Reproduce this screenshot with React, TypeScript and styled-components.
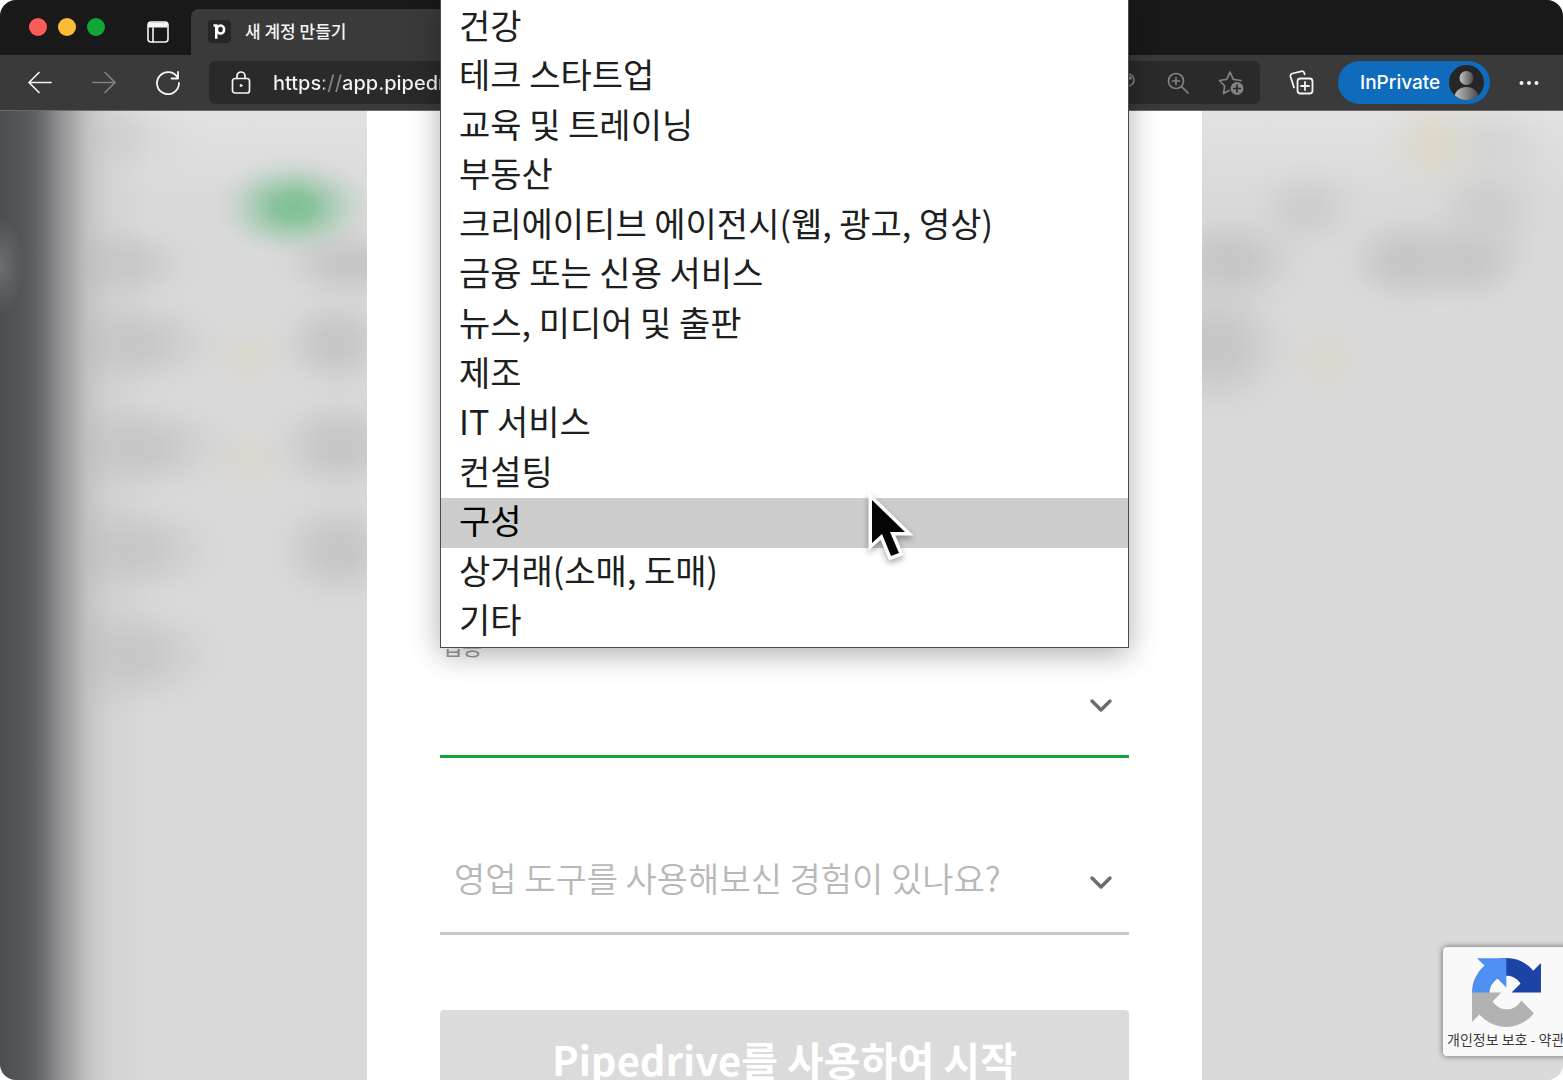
import React from "react";
import styled, { createGlobalStyle } from "styled-components";

const korean = '"Noto Sans CJK KR", "Noto Sans", sans-serif';
const chrome = 'Inter, "Noto Sans CJK KR", sans-serif';

const GlobalStyle = createGlobalStyle`
  *, *::before, *::after { box-sizing: border-box; }
  body { margin: 0; background: #ffffff; font-family: ${korean}; }
  button, input, select { font: inherit; border: 0; padding: 0; margin: 0; background: none; color: inherit; }
`;

const BrowserWindow = styled.div`
  display: flex;
  flex-direction: column;
  height: 100vh;
  position: relative;
  overflow: hidden;
  border-radius: 16px;
  background: #dadada;
`;

const TitleBar = styled.header`
  display: flex;
  align-items: center;
  height: 55px;
  padding-left: 29px;
  background: #191919;
`;

const Lights = styled.div`
  display: flex;
  gap: 11px;
  padding-bottom: 2px;
`;

const Light = styled.button<{ $color: string }>`
  width: 18px;
  height: 18px;
  border-radius: 50%;
  background: ${(p) => p.$color};
`;

const IconButton = styled.button<{ $width?: number; $dim?: boolean }>`
  display: flex;
  align-items: center;
  justify-content: center;
  flex: none;
  width: ${(p) => p.$width ?? 64}px;
  height: 46px;
  color: ${(p) => (p.$dim ? "#828282" : "#f4f4f4")};
`;

const TabActions = styled.div`
  align-self: flex-end;
  padding: 0 11px 0 31px;
`;

const Tab = styled.div`
  align-self: flex-end;
  display: flex;
  align-items: center;
  gap: 14px;
  width: 500px;
  height: 46px;
  padding: 0 17px 2px;
  border-radius: 8px 8px 0 0;
  background: #3a3a3a;
  color: #f4f4f4;
  font-size: 17px;
  font-weight: 500;
  line-height: 24px;
`;

const Toolbar = styled.nav`
  display: flex;
  align-items: center;
  height: 56px;
  padding-left: 8px;
  background: #3a3a3a;
  border-bottom: 1px solid #6a6a6a;
  font-family: ${chrome};
`;

const AddressBar = styled.form`
  flex: 1;
  display: flex;
  align-items: center;
  min-width: 0;
  height: 43px;
  margin: 0 9px;
  padding-right: 3px;
  border-radius: 6px;
  background: #2a2a2a;
`;

const Address = styled.input`
  flex: 1;
  min-width: 0;
  height: 43px;
  font-size: 20px;
  font-weight: 500;
  outline: none;
  background: linear-gradient(90deg, #f4f4f4 51px, #828282 51px, #828282 69px, #f4f4f4 69px);
  background-clip: text;
  -webkit-background-clip: text;
  color: transparent;
`;

const ProfileButton = styled.button`
  display: flex;
  align-items: center;
  justify-content: space-between;
  flex: none;
  width: 152px;
  height: 43px;
  margin: 0 5px;
  padding: 0 6px 0 22px;
  border-radius: 22px;
  background: #0f6cbd;
  color: #ffffff;
  font-size: 19px;
  font-weight: 500;
  line-height: 24px;
`;

const Page = styled.main`
  flex: 1;
  display: grid;
  grid-template-columns: 367fr 835fr 361fr;
  min-height: 0;
`;

type Spot = [x: number, y: number, rx: number, ry: number, color: string];

const paint = (spots: Spot[]) =>
  spots
    .map(
      ([x, y, rx, ry, c]) =>
        `radial-gradient(${rx}px ${ry}px at ${x}px ${y}px, rgba(${c}, 1) 0%, rgba(${c}, 0.88) 25%, rgba(${c}, 0.5) 50%, rgba(${c}, 0.16) 75%, rgba(${c}, 0) 100%)`
    )
    .join(", ");

const grey = "197, 197, 197";
const softGrey = "205, 205, 205";
const yellow = "220, 216, 202";
const paleYellow = "218, 215, 206";

const leftSpots: Spot[] = [
  [293, 96, 80, 52, "128, 192, 149"],
  [115, 26, 90, 50, "211, 212, 212"],
  [110, 153, 100, 50, grey],
  [350, 153, 84, 46, grey],
  [125, 232, 112, 58, grey],
  [337, 232, 70, 58, grey],
  [130, 336, 118, 60, grey],
  [340, 335, 82, 60, grey],
  [120, 439, 118, 62, grey],
  [338, 439, 76, 64, grey],
  [120, 544, 118, 66, grey],
  [248, 246, 46, 40, paleYellow],
  [250, 349, 46, 42, paleYellow],
];

const rightSpots: Spot[] = [
  [233, 34, 60, 56, yellow],
  [105, 98, 64, 50, softGrey],
  [290, 36, 76, 54, "212, 213, 212"],
  [286, 98, 70, 68, softGrey],
  [28, 150, 88, 58, grey],
  [204, 150, 74, 56, grey],
  [268, 147, 70, 56, grey],
  [14, 235, 88, 80, grey],
  [123, 248, 50, 46, paleYellow],
];

const PageSide = styled.div<{ $sidebar?: boolean; $spots: Spot[] }>`
  background:
    ${(p) =>
      p.$sidebar
        ? `radial-gradient(24px 50px at 0px 155px, rgba(112, 114, 116, 0.9), rgba(112, 114, 116, 0)),
           linear-gradient(90deg, #4b4d51 0px, #54565a 22px, #606266 36px, #717376 46px, #858688 54px, #979798 63px, #a6a6a6 72px, rgba(180, 180, 180, 0.95) 80px, rgba(190, 190, 190, 0.75) 90px, rgba(200, 200, 200, 0.4) 110px, rgba(212, 212, 212, 0) 150px),`
        : ""}
    ${(p) => paint(p.$spots)},
    linear-gradient(180deg, #e2e2e2 0px, #dadada 80px);
`;

const Dialog = styled.section`
  padding: 525px 73px 0;
  background: #ffffff;
`;

const Form = styled.form`
  display: flex;
  flex-direction: column;
  color: #26292c;
`;

const Field = styled.div`
  position: relative;
  display: flex;
  flex-direction: column;
  margin-bottom: 55px;
`;

const Label = styled.label`
  height: 24px;
  padding-left: 2px;
  color: #9a9a9a;
  font-size: 22px;
  line-height: 18px;
`;

const SelectBox = styled.div<{ $active?: boolean }>`
  display: flex;
  align-items: center;
  height: 98px;
  padding-right: 16px;
  border-bottom: 3px solid ${(p) => (p.$active ? "#17a23c" : "#c8c8c8")};
  color: #6c6c6c;
`;

const Select = styled.select`
  appearance: none;
  flex: 1;
  min-width: 0;
  height: 95px;
  padding: 0 56px 14px 14px;
  margin-right: -40px;
  color: #b8b8b8;
  font-size: 34px;
  font-weight: 350;
  line-height: 50px;
  outline: none;
`;

const Chevron = styled.svg`
  flex: none;
  margin-bottom: 4px;
  pointer-events: none;
`;

const Menu = styled.ul`
  position: absolute;
  z-index: 5;
  left: 0;
  right: 0;
  bottom: calc(100% - 12px);
  display: grid;
  grid-auto-rows: 1fr;
  height: 649px;
  margin: 0;
  padding: 4px 0 0;
  list-style: none;
  border: 1px solid #4c4c4c;
  border-top: 0;
  background: #ffffff;
  box-shadow: 0 6px 28px rgba(0, 0, 0, 0.32);
`;

const Option = styled.li<{ $active?: boolean }>`
  display: flex;
  align-items: center;
  padding: 0 18px 6px;
  background: ${(p) => (p.$active ? "#cdcdcd" : "transparent")};
  color: ${(p) => (p.$active ? "#000000" : "#1c1e20")};
  font-size: 34px;
  line-height: 42px;
  white-space: nowrap;
`;

const Pointer = styled.svg`
  position: absolute;
  left: 421px;
  top: 489px;
  filter: drop-shadow(0 3px 3px rgba(0, 0, 0, 0.35));
`;

const Submit = styled.button`
  height: 110px;
  margin-top: 20px;
  padding-bottom: 12px;
  border-radius: 4px;
  background: #dbdbdb;
  color: #ffffff;
  font-size: 40px;
  font-weight: 700;
  line-height: 60px;
  white-space: nowrap;
`;

const Captcha = styled.aside`
  position: absolute;
  right: -16px;
  bottom: 24px;
  display: flex;
  flex-direction: column;
  align-items: flex-start;
  gap: 2px;
  width: 136px;
  height: 109px;
  padding: 11px 0 0 4px;
  border-radius: 4px;
  background: #f9f9f9;
  box-shadow: 0 0 6px rgba(0, 0, 0, 0.55);
  color: #3c3c3c;
  font-size: 14px;
  line-height: 20px;
  white-space: nowrap;
  svg { margin-left: 25px; }
  a { color: inherit; text-decoration: none; }
`;

const industries = [
  "건강",
  "테크 스타트업",
  "교육 및 트레이닝",
  "부동산",
  "크리에이티브 에이전시(웹, 광고, 영상)",
  "금융 또는 신용 서비스",
  "뉴스, 미디어 및 출판",
  "제조",
  "IT 서비스",
  "컨설팅",
  "구성",
  "상거래(소매, 도매)",
  "기타",
];

const line = {
  fill: "none",
  stroke: "currentColor",
  strokeWidth: 2,
  strokeLinecap: "round" as const,
  strokeLinejoin: "round" as const,
};

const SidebarIcon = () => (
  <svg width="22" height="22" viewBox="0 0 22 22" {...line} strokeWidth={1.6}>
    <rect x="1" y="1" width="20" height="20" rx="3" />
    <path d="M2 2h18v4H2z" fill="currentColor" strokeWidth="1" />
    <path d="M6 7v14" />
  </svg>
);

const Favicon = () => (
  <svg width="23" height="23" viewBox="0 0 23 23">
    <rect width="23" height="23" rx="4" fill="#262626" />
    <ellipse cx="12.500" cy="9.500" rx="3.600" ry="4" fill="none" stroke="#fff" strokeWidth="2.600" />
    <path d="M5.500 4.300h4v14.500H7V6.800H5.500z" fill="#fff" />
  </svg>
);

const BackIcon = () => (
  <svg width="24" height="24" viewBox="0 0 24 24" {...line} strokeWidth={1.7}>
    <path d="M23 11.500H1M11 1.500l-10 10 10 10" />
  </svg>
);

const ForwardIcon = () => (
  <svg width="24" height="24" viewBox="0 0 24 24" {...line} strokeWidth={1.7}>
    <path d="M1 11.500h22M13 1.500l10 10-10 10" />
  </svg>
);

const ReloadIcon = () => (
  <svg width="26" height="26" viewBox="0 0 26 26" {...line} strokeWidth={1.800}>
    <path d="M23 8.500A11 11 0 1 0 24 13M23 2v6.500h-6.500" />
  </svg>
);

const LockIcon = () => (
  <svg width="20" height="24" viewBox="0 0 20 24" {...line} strokeWidth={1.700}>
    <rect x="1.500" y="7.500" width="17" height="14.500" rx="2.500" />
    <path d="M6 7.500V5a4 4 0 0 1 8 0v2.500" />
    <circle cx="10" cy="14.500" r="1" fill="currentColor" strokeWidth="1" />
  </svg>
);

const KeyIcon = () => (
  <svg width="24" height="24" viewBox="0 0 24 24" {...line} strokeWidth={1.700}>
    <circle cx="15" cy="9" r="6" />
    <circle cx="17" cy="7" r="1" />
    <path d="M11 13l-8 8" />
  </svg>
);

const ZoomIcon = () => (
  <svg width="22" height="22" viewBox="0 0 22 22" {...line} strokeWidth={1.700}>
    <circle cx="9" cy="9" r="7.500" />
    <path d="M14.500 14.500L21 21M9 5.500v7M5.500 9h7" />
  </svg>
);

const StarIcon = () => (
  <svg width="26" height="26" viewBox="0 0 26 26" {...line} strokeWidth={1.700}>
    <path d="M11 20.500L5.500 23.500l1.200-7.500L1.500 10.500l7.200-1.200L12 2l3.300 7.300 7.700 1.200" />
    <circle cx="19" cy="18.500" r="6.500" fill="currentColor" stroke="none" />
    <path d="M19 15.200v6.600M15.700 18.500h6.600" stroke="#2a2a2a" />
  </svg>
);

const CollectionsIcon = () => (
  <svg width="25" height="25" viewBox="0 0 25 25" {...line} strokeWidth={1.800}>
    <rect x="8.500" y="8.500" width="15" height="15" rx="3" />
    <path d="M16 12v8M12 16h8M5 17.500L1.500 6.500a2.500 2.500 0 0 1 1.800-3l9-2.200a2.500 2.500 0 0 1 3 1.800l.3 1.200" />
  </svg>
);

const Avatar = () => (
  <svg width="35" height="35" viewBox="0 0 35 35">
    <defs>
      <linearGradient id="avatarShade">
        <stop offset="0" stopColor="#c4c4c4" />
        <stop offset="1" stopColor="#484848" />
      </linearGradient>
      <clipPath id="avatarClip">
        <circle cx="17.500" cy="17.500" r="17.500" />
      </clipPath>
    </defs>
    <circle cx="17.500" cy="17.500" r="17.500" fill="#262626" />
    <g clipPath="url(#avatarClip)" fill="url(#avatarShade)">
      <circle cx="17.500" cy="13" r="7" />
      <path d="M5 35c0-8 5-13 12.500-13S30 27 30 35z" />
    </g>
  </svg>
);

const DotsIcon = () => (
  <svg width="20" height="6" viewBox="0 0 20 6" fill="currentColor">
    <circle cx="2.500" cy="3" r="2" />
    <circle cx="10" cy="3" r="2" />
    <circle cx="17.500" cy="3" r="2" />
  </svg>
);

const ChevronIcon = () => (
  <Chevron width="24" height="16" viewBox="0 0 24 16" {...line} strokeWidth={3.500}>
    <path d="M3 3l9 9 9-9" />
  </Chevron>
);

const CaptchaLogo = () => (
  <svg width="69" height="69" viewBox="0 0 64 64">
    <path
      fill="#1c43a6"
      d="M64 31.955l-.033-1.370V4.687l-7.160 7.160C50.948 4.674 42.033.093 32.050.093c-10.400 0-19.622 4.960-25.458 12.640l11.736 11.860a15.550 15.550 0 0 1 4.754-5.334c2.050-1.600 4.952-2.906 8.968-2.906.485 0 .860.057 1.135.163 4.976.393 9.288 3.140 11.828 7.124l-8.307 8.307L64 31.953"
    />
    <path
      fill="#5090f2"
      d="M31.862.094l-1.370.033H4.594l7.160 7.160C4.580 13.147 0 22.060 0 32.046c0 10.400 4.960 19.622 12.640 25.458L24.500 45.768a15.550 15.550 0 0 1-5.334-4.754c-1.600-2.050-2.906-4.952-2.906-8.968 0-.485.057-.860.163-1.135.393-4.976 3.140-9.288 7.124-11.828l8.307 8.307L31.860.095"
    />
    <path
      fill="#b2b2b2"
      d="M.001 32.045l.033 1.370v25.898l7.160-7.160c5.860 7.173 14.774 11.754 24.760 11.754 10.400 0 19.622-4.960 25.458-12.640l-11.736-11.860a15.550 15.550 0 0 1-4.754 5.334c-2.050 1.600-4.952 2.906-8.968 2.906-.485 0-.860-.057-1.135-.163-4.976-.393-9.288-3.140-11.828-7.124l8.307-8.307c-10.522.040-22.400.066-27.295-.005"
    />
  </svg>
);

export default function App() {
  return (
    <BrowserWindow>
      <GlobalStyle />
      <TitleBar>
        <Lights>
          <Light $color="#fc5b57" aria-label="닫기" />
          <Light $color="#fdbc36" aria-label="최소화" />
          <Light $color="#12a637" aria-label="확대" />
        </Lights>
        <TabActions>
          <IconButton $width={44} aria-label="탭 작업">
            <SidebarIcon />
          </IconButton>
        </TabActions>
        <Tab>
          <Favicon />
          새 계정 만들기
        </Tab>
      </TitleBar>
      <Toolbar>
        <IconButton aria-label="뒤로">
          <BackIcon />
        </IconButton>
        <IconButton $dim aria-label="앞으로">
          <ForwardIcon />
        </IconButton>
        <IconButton aria-label="새로 고침">
          <ReloadIcon />
        </IconButton>
        <AddressBar>
          <IconButton type="button" aria-label="사이트 정보">
            <LockIcon />
          </IconButton>
          <Address aria-label="주소" defaultValue="https://app.pipedrive.com" />
          <IconButton type="button" $width={53} $dim aria-label="암호">
            <KeyIcon />
          </IconButton>
          <IconButton type="button" $width={53} $dim aria-label="확대/축소">
            <ZoomIcon />
          </IconButton>
          <IconButton type="button" $width={53} $dim aria-label="즐겨찾기">
            <StarIcon />
          </IconButton>
        </AddressBar>
        <IconButton aria-label="컬렉션">
          <CollectionsIcon />
        </IconButton>
        <ProfileButton>
          InPrivate
          <Avatar />
        </ProfileButton>
        <IconButton $width={68} aria-label="설정 및 기타">
          <DotsIcon />
        </IconButton>
      </Toolbar>
      <Page>
        <PageSide $sidebar $spots={leftSpots} />
        <Dialog>
          <Form>
            <Field>
              <Label htmlFor="industry">업종</Label>
              <SelectBox $active>
                <Select id="industry" defaultValue="">
                  <option value="" />
                  {industries.map((name) => (
                    <option key={name}>{name}</option>
                  ))}
                </Select>
                <ChevronIcon />
              </SelectBox>
              <Menu role="listbox" aria-label="업종">
                {industries.map((name) => (
                  <Option
                    key={name}
                    role="option"
                    aria-selected={name === "구성"}
                    $active={name === "구성"}
                  >
                    {name}
                  </Option>
                ))}
                <Pointer width="60" height="84" viewBox="0 0 60 84" aria-hidden="true">
                  <path
                    d="M10 12v43l10-9 9 22 8-3-9-21h15z"
                    fill="#050505"
                    stroke="#ffffff"
                    strokeWidth="7"
                    paintOrder="stroke"
                  />
                </Pointer>
              </Menu>
            </Field>
            <Field>
              <Label htmlFor="experience" />
              <SelectBox>
                <Select id="experience" aria-label="영업 도구 경험">
                  <option>영업 도구를 사용해보신 경험이 있나요?</option>
                </Select>
                <ChevronIcon />
              </SelectBox>
            </Field>
            <Submit type="button">Pipedrive를 사용하여 시작</Submit>
          </Form>
        </Dialog>
        <PageSide $spots={rightSpots} />
      </Page>
      <Captcha>
        <CaptchaLogo />
        <span>
          <a href="#privacy">개인정보 보호</a> - <a href="#terms">약관</a>
        </span>
      </Captcha>
    </BrowserWindow>
  );
}
